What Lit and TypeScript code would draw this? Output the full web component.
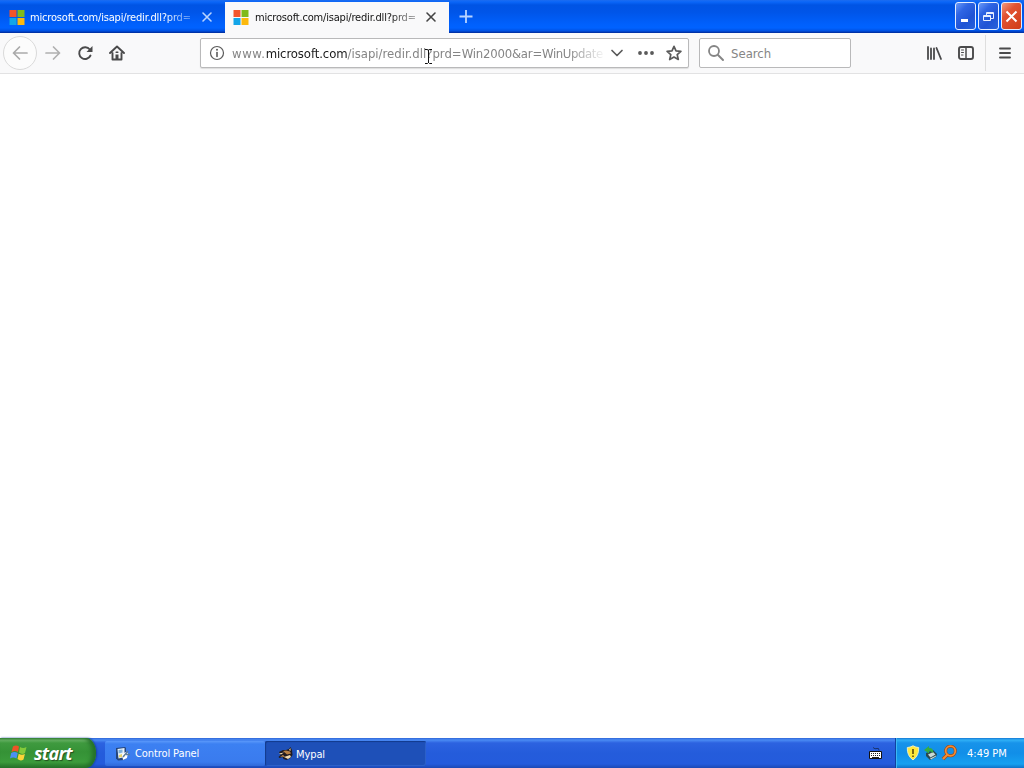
import { LitElement, html, css, svg } from "lit";
import { customElement } from "lit/decorators.js";

const msLogo = html`<svg width="16" height="16" viewBox="0 0 16 16">
  <path fill="#f2552c" d="M0.5 1h7v7h-7z"/><path fill="#80ba1c" d="M8.500 1h7v7h-7z"/>
  <path fill="#12a5e8" d="M0.5 9h7v7h-7z"/><path fill="#fcb90d" d="M8.500 9h7v7h-7z"/></svg>`;

const closeIcon = html`<svg class="close" width="12" height="12" viewBox="0 0 12 12" fill="none" stroke="currentColor" stroke-width="1.6" stroke-linecap="round"><path d="M2 2l8 8M10 2l-8 8"/></svg>`;

const icon = (body: unknown) => html`<svg width="16" height="16" viewBox="0 0 16 16" fill="none" stroke="currentColor" stroke-width="1.900" stroke-linecap="round" stroke-linejoin="round">${body}</svg>`;

@customElement("app-root")
export class AppRoot extends LitElement {
  static styles = css`
    :host { display: flex; flex-direction: column; width: 1024px; height: 768px; position: relative; overflow: hidden; background: #fff; font-family: "DejaVu Sans Condensed", "DejaVu Sans", sans-serif; font-stretch: condensed; color: #222; }
    * { box-sizing: border-box; }
    svg { display: block; flex: none; }
    .tabs { display: flex; height: 33px; flex: none; background: linear-gradient(#1c6cf0 0, #0a66f8 2px, #0054e4 5px, #0055e8 12px, #0060fc 24px, #0062ff 28px, #0050e0 31px, #0038b4 32px, #002c9c 33px); }
    .tab { display: flex; align-items: center; width: 225px; padding: 0 12px 0 9px; color: #fff; font-size: 11px; }
    .tab.active { width: 224px; margin-top: 2px; height: 31px; padding-left: 8px; padding-bottom: 2px; background: #f9f9fa; color: #111; }
    .tab-label { width: 164px; margin-left: 5px; padding-top: 1px; white-space: nowrap; letter-spacing: -0.18px; -webkit-mask-image: linear-gradient(90deg, #000 134px, transparent 172px); mask-image: linear-gradient(90deg, #000 134px, transparent 172px); }
    .active .tab-label { margin-left: 6px; }
    .tab .close { margin-left: 7px; color: #b9d4ff; }
    .tab.active .close { margin-left: 8px; color: #444; }
    .plus { margin: 9px 0 0 9px; color: #b9d4ff; }
    .winbtns { display: flex; gap: 2px; margin: 2px 2px 0 auto; }
    .winbtn { display: flex; align-items: center; justify-content: center; width: 21px; height: 28px; border: 1px solid #e4edff; border-radius: 3px; background: linear-gradient(135deg, #6b9af8 0, #2f65e4 30%, #1f53d4 65%, #2762dc 100%); }
    .winbtn.x { background: linear-gradient(135deg, #f29a80 0, #e25332 35%, #cf3c18 100%); }
    .toolbar { display: flex; align-items: center; height: 41px; flex: none; background: #f9f9fa; border-bottom: 1px solid #e2e2e3; color: #4a4a4b; }
    .back { display: flex; align-items: center; justify-content: center; width: 34px; height: 34px; margin-left: 3px; border: 1px solid #dadada; border-radius: 50%; background: #fcfcfc; color: #aaa; }
    .fwd { margin-left: 8px; color: #b0b0b0; }
    .reload { margin-left: 16px; }
    .home { margin-left: 16px; }
    .field { display: flex; align-items: center; height: 30px; border: 1px solid #b9b9ba; border-radius: 2px; background: #fff; }
    .url { width: 489px; margin-left: 75px; padding-left: 8px; color: #5a5a5a; box-shadow: 0 1px 1px #ddd; }
    .address { width: 371px; margin-left: 7px; white-space: nowrap; font-size: 13px; color: #858585; -webkit-mask-image: linear-gradient(90deg, #000 335px, transparent 375px); mask-image: linear-gradient(90deg, #000 335px, transparent 375px); }
    .www { letter-spacing: 0.6px; }
    .host { color: #1a1a1a; letter-spacing: -0.1px; }
    .query { letter-spacing: -0.2px; }
    .tail { letter-spacing: -0.4px; }
    .chev { margin-left: 6px; }
    .dots { margin-left: 13px; }
    .star { margin-left: 12px; }
    .search { width: 152px; margin-left: 10px; padding-left: 8px; color: #858585; font-size: 13px; }
    .search-label { margin-left: 7px; }
    .library { margin-left: 75px; }
    .sidebar { margin-left: 16px; }
    .sep { width: 1px; height: 36px; margin-left: 11px; background: #dedede; }
    .menu { margin-left: 11px; }
    .page { flex: 1; background: #fff; }
    .cursor { position: absolute; left: 424px; top: 49px; }
    .taskbar { display: flex; height: 30px; flex: none; background: linear-gradient(#2f66d8 0, #4a8bf4 2px, #2c62e0 5px, #245cdb 15px, #245bdc 26px, #1c48b4 30px); color: #fff; font-size: 11px; }
    .start { display: flex; align-items: center; width: 96px; padding-left: 10px; border-radius: 0 10px 10px 0 / 0 15px 15px 0; background: linear-gradient(#3c8a3c 0, #6cb668 2px, #3f9a3f 5px, #359236 14px, #3b9b3b 24px, #26742a 30px); box-shadow: inset -4px 0 4px #247029, 1px 0 2px #16409c; }
    .start-label { margin-left: 6px; font: italic bold 18px "Open Sans", "Liberation Sans", sans-serif; letter-spacing: -0.7px; text-shadow: 1px 1px 1px #23501f; }
    .task { display: flex; align-items: center; width: 160px; height: 25px; margin: 3px 0 0 9px; padding-left: 10px; border-radius: 2px; background: linear-gradient(#5a98fa 0, #3c80f2 3px, #3a7bee 21px, #3069d8 25px); }
    .task.pressed { margin-left: 0; width: 161px; padding-left: 13px; background: #1e50b8; box-shadow: inset 1px 1px 1px #123a8c, inset -1px -1px 0 #2c60c8; }
    .task-label { margin-left: 4px; letter-spacing: -0.1px; white-space: nowrap; }
    .pressed .task-label { margin-left: 2px; padding-top: 1px; }
    .kbd { margin: 8px 13px 0 auto; }
    .tray { display: flex; align-items: center; width: 129px; padding-left: 9px; gap: 2px; border-left: 1px solid #1042a0; background: linear-gradient(#1478d4 0, #30b0f6 2px, #1793ea 5px, #118ee8 15px, #16a0f0 26px, #0f72c8 30px); box-shadow: inset 1px 0 0 #3cb8f4; }
    .clock { margin-left: 8px; white-space: nowrap; }
  `;

  render() {
    return html`
      <div class="tabs">
        <div class="tab">${msLogo}<span class="tab-label">microsoft.com/isapi/redir.dll?prd=</span>${closeIcon}</div>
        <div class="tab active">${msLogo}<span class="tab-label">microsoft.com/isapi/redir.dll?prd=</span>${closeIcon}</div>
        <svg class="plus" width="16" height="16" viewBox="0 0 16 16" fill="none" stroke="currentColor" stroke-width="1.800"><path d="M1.500 7.500h13M8 1v13"/></svg>
        <div class="winbtns">
          <div class="winbtn"><svg width="15" height="15"><path fill="#fff" d="M3 10h7v3h-7z"/></svg></div>
          <div class="winbtn"><svg width="15" height="15" viewBox="0 0 15 15" fill="none" stroke="#e6eeff"><path d="M5.500 6V3.500h7v6H10M5.500 4.500h7M2.500 6.500h7v5h-7zM2.500 7.500h7"/></svg></div>
          <div class="winbtn x"><svg width="15" height="15" viewBox="0 0 15 15" stroke="#fff" stroke-width="2"><path d="M2.500 2.500l10 10M12.500 2.500l-10 10"/></svg></div>
        </div>
      </div>
      <div class="toolbar">
        <div class="back">${icon(svg`<path d="M15 8H1.500M7.500 2L1.500 8l6 6" stroke-width="1.700"/>`)}</div>
        <div class="fwd">${icon(svg`<path d="M1 8h13.500M8.500 2l6 6-6 6" stroke-width="1.700"/>`)}</div>
        <div class="reload">${icon(svg`<path d="M13.500 10.500A5.900 5.900 0 1 1 12.800 4.500"/><path d="M15.500 1v6H9.500z" fill="currentColor" stroke="none"/>`)}</div>
        <div class="home">${icon(svg`<path d="M1 8l7-6.500L15 8M3.500 8v6.500h9V8" /><path d="M6.500 14.500V9.500h3v5z" fill="currentColor" stroke="none"/><path d="M7.200 7.300h1.600" stroke-width="1.500"/>`)}</div>
        <div class="field url">
          ${icon(svg`<circle cx="8" cy="8" r="6.500" stroke-width="1.200"/><path d="M8 7.500v4" stroke-width="1.600"/><circle cx="8" cy="4.800" r="1" fill="currentColor" stroke="none"/>`)}
          <div class="address"><span class="www">www.</span><span class="host">microsoft.com</span>/isapi/redir.dll?prd=<span class="query">Win2000&amp;ar=</span><span class="tail">WinUpdate</span></div>
          <div class="chev">${icon(svg`<path d="M3 5.500l5 5 5-5" stroke-width="1.700"/>`)}</div>
          <div class="dots">${icon(svg`<path d="M2 8h.01M8 8h.01M14 8h.01" stroke-width="3.800"/>`)}</div>
          <div class="star">${icon(svg`<path d="M8 1.300l2 4.500 4.900.5-3.700 3.300 1.100 4.900L8 12l-4.300 2.500 1.100-4.900L1.100 6.300 6 5.800z" stroke-width="1.700"/>`)}</div>
        </div>
        <div class="field search">
          ${icon(svg`<circle cx="6" cy="6" r="5" stroke-width="1.800"/><path d="M10 10l5 5"/>`)}
          <span class="search-label">Search</span>
        </div>
        <div class="library">${icon(svg`<path d="M2 2v12M5 3.500V14M8 3.500V14M10.500 3L15 14" stroke-width="1.800"/>`)}</div>
        <div class="sidebar">${icon(svg`<rect x="1" y="2" width="14" height="12" rx="2"/><path d="M8 2v12" stroke-width="1.500"/><path d="M3.500 5h2M3.500 7.500h2M3.500 10h1.500" stroke-width="1"/>`)}</div>
        <div class="sep"></div>
        <div class="menu">${icon(svg`<path d="M3 3.500h10M3 8h10M3 12.500h10"/>`)}</div>
      </div>
      <div class="page"></div>
      <div class="taskbar">
        <div class="start">
          <svg width="18" height="18" viewBox="0 0 18 18"><path fill="#ee5427" d="M3 2.500q3-2 6 0L8 8Q5 6 1.500 8z"/><path fill="#83ca3a" d="M10 3q3 2 6.500 0L15 9q-3 2-6-.5z"/><path fill="#4c90f4" d="M1.200 9q3-2 6.500 0L6.500 14.500Q3 12.500 0 14.500z"/><path fill="#fcd438" d="M8.700 9.700q3 2 6.200.3l-1.400 5.500q-3 2-6-.5z"/></svg>
          <span class="start-label">start</span>
        </div>
        <div class="task">
          <svg width="16" height="16" viewBox="0 0 16 16"><path fill="#24457c" d="M1 2l9-1 1 1v9l-2 3-6 .5-2-2z"/><path fill="#e9f3fb" d="M2.500 3l7-1v9l-6 1.500z"/><path fill="#7fb1dc" d="M3.500 4l4-.5v3l-4 1z"/><path fill="#e8d36a" d="M4 9l3-1v3l-3 .5z"/><path fill="#fff" d="M7 8l4-2 2 1-1 5-4 2z"/><path d="M8 11l5-6M11 8.500h4" stroke="#5d7d9c" stroke-width="1.500"/></svg>
          <span class="task-label">Control Panel</span>
        </div>
        <div class="task pressed">
          <svg width="16" height="16" viewBox="0 0 16 16"><path fill="#201b20" d="M1 6l4-2 3 0 3-1 1.500-2 1.500 3 .500 5-2 3-4 2-3-1-1-2-3 1-1-1 2-2z"/><path fill="#b98042" d="M5 5l3-.5 4 1 1 2-4 1z"/><path fill="#f3ddb0" d="M1 7.500l5-1-3 2zM6 11l6-2 1 2-3 2zM11 4l1.500-2v3z"/><path fill="#d89a50" d="M2 11l3-2 2 2-3-.5z"/></svg>
          <span class="task-label">Mypal</span>
        </div>
        <svg class="kbd" width="13" height="14" viewBox="0 0 13 14"><path d="M4 1.500q2 2 4 1t2 2" fill="none" stroke="#18346f"/><path fill="#fff" stroke="#111" d="M.5 5.500h12v7H.5z"/><path d="M2 7.500h9M2 9.500h9" stroke="#222" stroke-dasharray="1 1"/><path d="M3 11.500h7" stroke="#222"/></svg>
        <div class="tray">
          <svg width="16" height="16" viewBox="0 0 16 16"><path fill="#ffe83c" stroke="#e8edc5" d="M8 .8q3 1.700 5.700 1.700.5 8-5.700 12.500Q1.800 10.500 2.300 2.500 5 2.500 8 .8z"/><path stroke="#5c4a08" stroke-width="1.600" d="M8 4v5M8 10.500v1.600"/></svg>
          <svg width="16" height="16" viewBox="0 0 16 16"><path fill="#29484f" d="M3 8l7-3 4 4-1 3-6 3-4-4z"/><path fill="#c9d9d6" d="M5 9.500l5-2.500 2.500 2.500-5 3zM7 13.500l6-3v1l-5 3z"/><path fill="#35ac43" d="M1 5l5-4v2q5 0 4 5L8 6.500 6 6v2.500z"/></svg>
          <svg width="16" height="16" viewBox="0 0 16 16" fill="none"><path stroke="#9b4b18" stroke-width="3.600" d="M2 14l5-5"/><circle cx="9.500" cy="6" r="4.800" stroke="#9b4b18" stroke-width="3"/><path stroke="#f38b34" stroke-width="2.200" d="M2 14l5-5"/><circle cx="9.500" cy="6" r="4.800" stroke="#f38b34" stroke-width="1.800"/></svg>
          <span class="clock">4:49 PM</span>
        </div>
      </div>
      <svg class="cursor" width="9" height="16" viewBox="0 0 9 16" fill="none" stroke="#111"><path d="M1 .5h2.500l1 1 1-1H8M4.500 1v13M1 14.500h2.500l1-1 1 1H8"/></svg>
    `;
  }
}
